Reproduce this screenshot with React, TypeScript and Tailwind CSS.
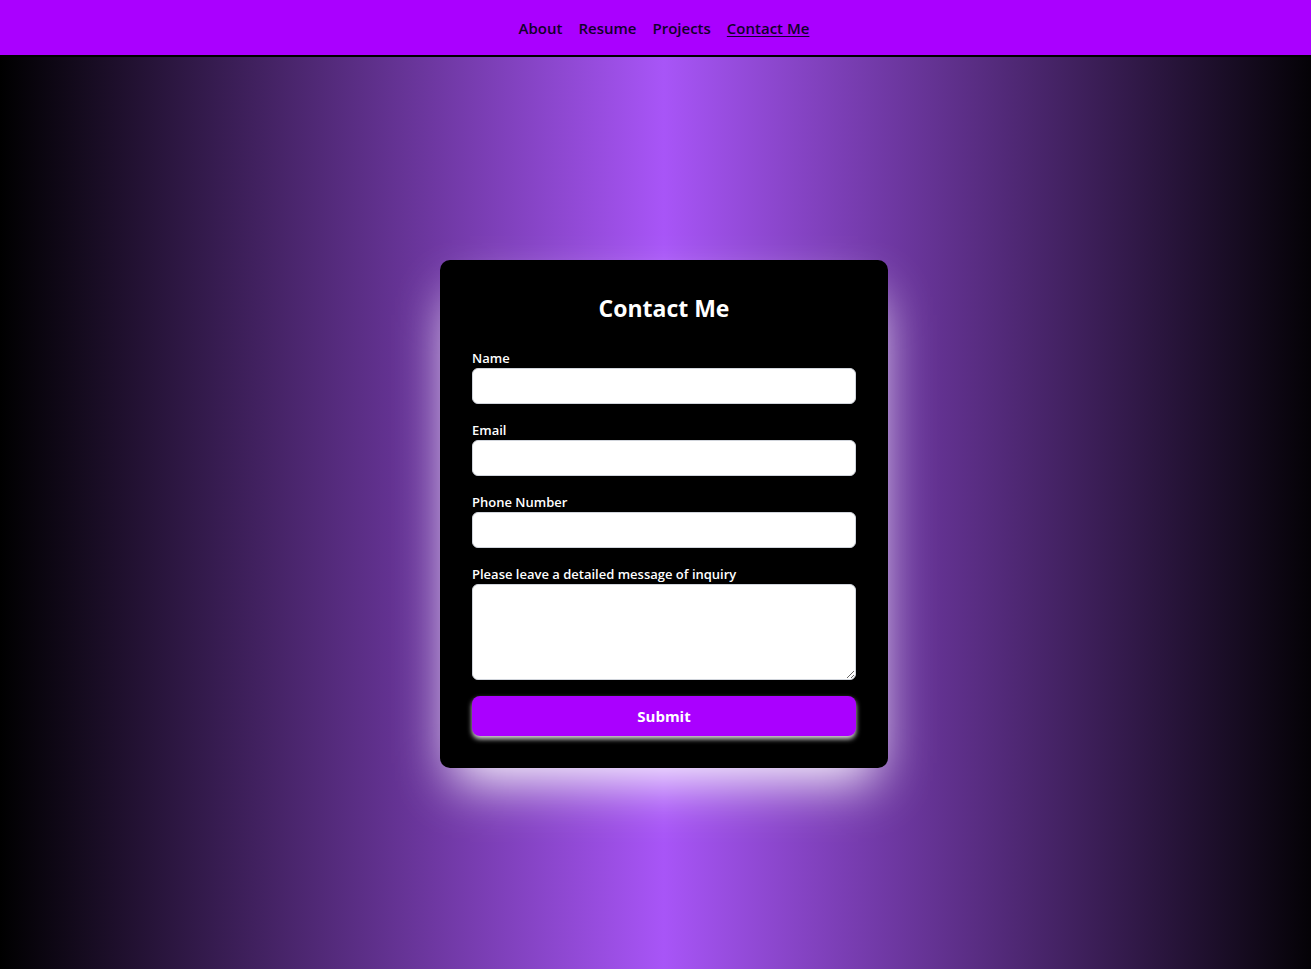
import { useState } from "react";

const links = [
  { label: "About", active: false },
  { label: "Resume", active: false },
  { label: "Projects", active: false },
  { label: "Contact Me", active: true },
];

const fields = [
  { label: "Name", type: "text" },
  { label: "Email", type: "email" },
  { label: "Phone Number", type: "tel" },
];

export default function App() {
  const [form, setForm] = useState({ name: "", email: "", phone: "", message: "" });

  return (
    <div className="min-h-screen flex flex-col font-['Open_Sans',sans-serif] bg-black bg-no-repeat bg-[length:1328px_100%] bg-[linear-gradient(to_right,#000000,#a855f7,#000000)]">
      {/* Nav */}
      <header className="h-[57px] shrink-0 bg-[#aa00ff] border-b-2 border-black flex items-center justify-center pl-[17px]">
        <nav className="flex items-center gap-4 text-[15px] font-semibold text-[#12002a] pt-px">
          {links.map((l) => (
            <a key={l.label} href="#" className={l.active ? "underline underline-offset-2" : ""}>
              {l.label}
            </a>
          ))}
        </nav>
      </header>

      {/* Contact card */}
      <main className="flex-1 flex justify-center pt-[203px] pl-[17px]">
        <form
          onSubmit={(e) => e.preventDefault()}
          className="w-[448px] h-fit bg-black rounded-[10px] p-8 shadow-[0_25px_50px_-12px_#ffffff]"
        >
          <h2 className="text-[23px] leading-8 font-bold text-white text-center mb-6">Contact Me</h2>

          {fields.map((f) => (
            <div key={f.label} className="mb-4">
              <label className="block text-[13px] leading-5 font-semibold text-white">{f.label}</label>
              <input
                type={f.type}
                className="block w-full h-9 rounded-md bg-white border border-gray-300 px-3 text-sm outline-none"
              />
            </div>
          ))}

          <div className="mb-4">
            <label className="block text-[13px] leading-5 font-semibold text-white">
              Please leave a detailed message of inquiry
            </label>
            <textarea
              value={form.message}
              onChange={(e) => setForm({ ...form, message: e.target.value })}
              className="block w-full h-24 rounded-md bg-white border border-gray-300 px-3 py-2 text-sm outline-none"
            />
          </div>

          <button
            type="submit"
            className="w-full h-10 rounded-lg bg-[#aa00ff] text-white font-bold text-[15px] shadow-[0_3px_5px_rgba(255,255,255,0.85)]"
          >
            Submit
          </button>
        </form>
      </main>
    </div>
  );
}
